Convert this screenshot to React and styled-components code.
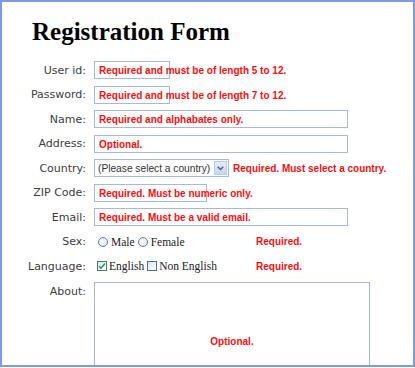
import React from "react";
import styled, { createGlobalStyle } from "styled-components";

const GlobalStyle = createGlobalStyle`
  html, body {
    margin: 0;
    padding: 0;
    background: #ffffff;
  }
`;

const Frame = styled.div`
  box-sizing: border-box;
  width: 415px;
  height: 367px;
  border: 2px solid #7f9ae0;
  overflow: hidden;
  background: #fff;
  padding-top: 17px;
`;

const Title = styled.h1`
  margin: 0 0 14px 30px;
  font-family: "Liberation Serif", "Times New Roman", serif;
  font-weight: bold;
  font-size: 25px;
  line-height: 25px;
  color: #000;
`;

const Row = styled.div`
  display: grid;
  grid-template-columns: 84px 1fr;
  column-gap: 8px;
  align-items: ${(p) => (p.$top ? "start" : "center")};
  height: ${(p) => (p.$top ? "auto" : "24.5px")};
  padding-top: ${(p) => (p.$top ? "3px" : "0")};
`;

const Label = styled.label`
  text-align: right;
  font-family: "DejaVu Sans", Verdana, sans-serif;
  font-size: 11px;
  color: #3c3c3c;
  padding-top: ${(p) => (p.$top ? "3px" : "0")};
`;

const Field = styled.div`
  position: relative;
  display: flex;
  align-items: center;
`;

const TextBox = styled.div`
  box-sizing: border-box;
  width: ${(p) => p.$w}px;
  height: 18px;
  border: 1px solid #a6b9d8;
  background: #fff;
`;

const Message = styled.span`
  font-family: "Liberation Sans", Arial, sans-serif;
  font-weight: bold;
  font-size: 10px;
  color: #ff0d0d;
  white-space: nowrap;
`;

const Overlay = styled(Message)`
  position: absolute;
  left: 5px;
  top: 50%;
  transform: translateY(-50%);
`;

const SelectBox = styled.div`
  box-sizing: border-box;
  width: 135px;
  height: 18px;
  border: 1px solid #a6b9d8;
  display: flex;
  align-items: center;
  justify-content: space-between;
  background: #fff;
`;

const SelectText = styled.span`
  font-family: "Liberation Sans", Arial, sans-serif;
  font-size: 10.2px;
  color: #333;
  padding-left: 3px;
  white-space: nowrap;
`;

const Arrow = styled.span`
  box-sizing: border-box;
  width: 13px;
  height: 14px;
  margin-right: 1px;
  border: 1px solid #b8cbe8;
  background: linear-gradient(#e4ecfa, #c6d5f0);
  display: flex;
  align-items: center;
  justify-content: center;
`;

const Inline = styled(Message)`
  margin-left: 4px;
`;

const Options = styled.div`
  width: ${(p) => p.$w}px;
  display: flex;
  align-items: center;
  padding-left: ${(p) => p.$pl}px;
  box-sizing: border-box;
`;

const Option = styled.span`
  display: flex;
  align-items: center;
  margin-right: 3px;
  font-family: "Liberation Serif", "Times New Roman", serif;
  font-size: 11.5px;
  color: #222;
`;

const Radio = styled.span`
  box-sizing: border-box;
  width: 10px;
  height: 10px;
  border-radius: 50%;
  border: 1px solid #5d7aa8;
  background: radial-gradient(circle at 40% 40%, #ffffff, #dfe6ee);
  margin-right: 3px;
`;

const Check = styled.span`
  box-sizing: border-box;
  width: 10px;
  height: 10px;
  border: 1px solid #4f6f9c;
  background: linear-gradient(135deg, #dfe6ee, #ffffff);
  margin-right: 2px;
  display: flex;
  align-items: center;
  justify-content: center;
`;

const TextArea = styled.div`
  box-sizing: border-box;
  width: 276px;
  height: 120px;
  border: 1px solid #a6b9d8;
  display: flex;
  align-items: center;
  justify-content: center;
`;

const Checkmark = () => (
  <svg width="8" height="8" viewBox="0 0 8 8">
    <path d="M1 4.2 L3 6.2 L7 1.6" fill="none" stroke="#21a421" strokeWidth="1.6" />
  </svg>
);

const Chevron = () => (
  <svg width="7" height="5" viewBox="0 0 7 5">
    <path d="M0.8 0.8 L3.5 3.6 L6.2 0.8" fill="none" stroke="#4d6185" strokeWidth="1.4" />
  </svg>
);

const textFields = [
  { label: "User id:", width: 76, msg: "Required and must be of length 5 to 12." },
  { label: "Password:", width: 76, msg: "Required and must be of length 7 to 12." },
  { label: "Name:", width: 254, msg: "Required and alphabates only." },
  { label: "Address:", width: 254, msg: "Optional." },
];

const moreFields = [
  { label: "ZIP Code:", width: 113, msg: "Required. Must be numeric only." },
  { label: "Email:", width: 254, msg: "Required. Must be a valid email." },
];

const TextRow = ({ label, width, msg }) => (
  <Row>
    <Label>{label}</Label>
    <Field>
      <TextBox $w={width} />
      <Overlay>{msg}</Overlay>
    </Field>
  </Row>
);

export default function App() {
  return (
    <>
      <GlobalStyle />
      <Frame>
        <Title>Registration Form</Title>
        {textFields.map((f) => (
          <TextRow key={f.label} {...f} />
        ))}
        <Row>
          <Label>Country:</Label>
          <Field>
            <SelectBox>
              <SelectText>(Please select a country)</SelectText>
              <Arrow>
                <Chevron />
              </Arrow>
            </SelectBox>
            <Inline>Required. Must select a country.</Inline>
          </Field>
        </Row>
        {moreFields.map((f) => (
          <TextRow key={f.label} {...f} />
        ))}
        <Row>
          <Label>Sex:</Label>
          <Field>
            <Options $w={162} $pl={4}>
              <Option>
                <Radio />
                Male
              </Option>
              <Option>
                <Radio />
                Female
              </Option>
            </Options>
            <Message>Required.</Message>
          </Field>
        </Row>
        <Row>
          <Label>Language:</Label>
          <Field>
            <Options $w={162} $pl={3}>
              <Option>
                <Check>
                  <Checkmark />
                </Check>
                English
              </Option>
              <Option>
                <Check />
                Non English
              </Option>
            </Options>
            <Message>Required.</Message>
          </Field>
        </Row>
        <Row $top>
          <Label $top>About:</Label>
          <Field>
            <TextArea>
              <Message>Optional.</Message>
            </TextArea>
          </Field>
        </Row>
      </Frame>
    </>
  );
}
